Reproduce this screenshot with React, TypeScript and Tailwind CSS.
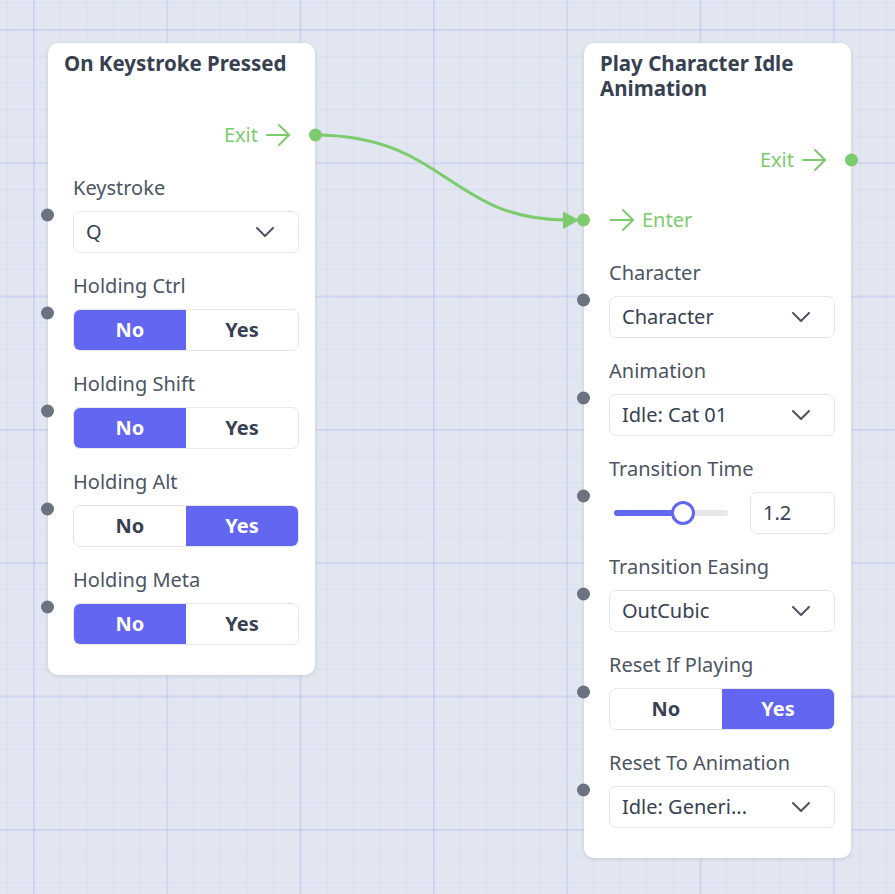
import { ReactNode } from 'react';

const GREEN = '#7ccb6d';

const Arrow = () => (
  <svg width="24" height="22" viewBox="0 0 24 22" fill="none" stroke={GREEN} strokeWidth="2" strokeLinecap="round" strokeLinejoin="round">
    <path d="M1 11H23" />
    <path d="M13 1L23 11L13 21" />
  </svg>
);

const Chevron = () => (
  <svg width="18" height="10" viewBox="0 0 18 10" fill="none" stroke="#4b5563" strokeWidth="2" strokeLinecap="round" strokeLinejoin="round">
    <path d="M1 1L9 9L17 1" />
  </svg>
);

const InDot = () => (
  <span className="absolute left-[-32.5px] top-1/2 -translate-y-1/2 w-[13px] h-[13px] rounded-full bg-[#6b7280]" />
);

const Field = ({ label, children }: { label: string; children: ReactNode }) => (
  <div className="relative">
    <InDot />
    <div className="h-[24px] leading-[24px] text-[20px] text-[#4b5563]">{label}</div>
    <div className="mt-[11px] h-[42px]">{children}</div>
  </div>
);

const Select = ({ value }: { value: string }) => (
  <div className="h-full flex items-center justify-between pl-[12px] pr-[24px] border border-[#e5e7eb] rounded-[7px] bg-white">
    <span className="text-[20px] text-[#374151] truncate">{value}</span>
    <Chevron />
  </div>
);

const Toggle = ({ yes }: { yes: boolean }) => (
  <div className="h-full flex border border-[#e5e7eb] rounded-[7px] overflow-hidden bg-white text-[20px] font-bold">
    <div className={yes ? 'flex-1 flex items-center justify-center text-[#374151]' : 'flex-1 flex items-center justify-center bg-[#6366f1] text-white'}>No</div>
    <div className={yes ? 'flex-1 flex items-center justify-center bg-[#6366f1] text-white' : 'flex-1 flex items-center justify-center text-[#374151]'}>Yes</div>
  </div>
);

const ExitRow = () => (
  <div className="relative h-[36px] flex items-center justify-end gap-[8px] pr-[25px]">
    <span className="text-[20px]" style={{ color: GREEN }}>Exit</span>
    <Arrow />
    <span className="absolute right-[-6.5px] top-1/2 -translate-y-1/2 w-[13px] h-[13px] rounded-full bg-[#7ccb6d]" />
  </div>
);

const Card = ({ title, left, top, children }: { title: ReactNode; left: number; top: number; children: ReactNode }) => (
  <div
    className="absolute w-[267px] bg-white rounded-[10px] shadow-[0_1px_4px_rgba(15,23,42,0.12)] pt-[8px] pb-[30px]"
    style={{ left, top }}
  >
    <div className="px-[16px] text-[20.5px] leading-[25px] font-bold text-[#374151]">{title}</div>
    {children}
  </div>
);

export default function App() {
  return (
    <div className="relative w-[895px] h-[894px] overflow-hidden font-['Noto_Sans',sans-serif] bg-[#e1e6f0] bg-[image:linear-gradient(to_right,rgba(99,102,241,0.11)_2px,transparent_2px),linear-gradient(to_bottom,rgba(99,102,241,0.11)_2px,transparent_2px),linear-gradient(to_right,rgba(99,102,241,0.06)_1px,transparent_1px),linear-gradient(to_bottom,rgba(99,102,241,0.06)_1px,transparent_1px)] bg-[size:133.333px_133.333px,133.333px_133.333px,26.667px_26.667px,26.667px_26.667px] bg-[position:33px_29px,33px_29px,6.5px_2.5px,6.5px_2.5px]">
      <svg className="absolute inset-0" width="895" height="894">
        <path d="M315 135 C 445 135, 450 220, 566 220" fill="none" stroke={GREEN} strokeWidth="3" />
        <polygon points="563,211.5 563,229 579,220.3" fill={GREEN} />
      </svg>

      <Card title="On Keystroke Pressed" left={48} top={43}>
        <div className="mt-[41px]">
          <ExitRow />
        </div>
        <div className="mt-[23px] pl-[25px] pr-[16px] flex flex-col gap-[21px]">
          <Field label="Keystroke"><Select value="Q" /></Field>
          <Field label="Holding Ctrl"><Toggle yes={false} /></Field>
          <Field label="Holding Shift"><Toggle yes={false} /></Field>
          <Field label="Holding Alt"><Toggle yes={true} /></Field>
          <Field label="Holding Meta"><Toggle yes={false} /></Field>
        </div>
      </Card>

      <Card title={<>Play Character Idle<br />Animation</>} left={584} top={43}>
        <div className="mt-[41px]">
          <ExitRow />
        </div>
        <div className="relative mt-[24px] h-[36px] flex items-center gap-[8px] pl-[26px]">
          <span className="absolute left-[-7.5px] top-1/2 -translate-y-1/2 w-[13px] h-[13px] rounded-full bg-[#7ccb6d]" />
          <Arrow />
          <span className="text-[20px]" style={{ color: GREEN }}>Enter</span>
        </div>
        <div className="mt-[23px] pl-[25px] pr-[16px] flex flex-col gap-[21px]">
          <Field label="Character"><Select value="Character" /></Field>
          <Field label="Animation"><Select value="Idle: Cat 01" /></Field>
          <Field label="Transition Time">
            <div className="h-full flex items-center gap-[17px]">
              <div className="w-[124px] px-[5px]">
                <div className="relative h-[6px] rounded-full bg-[#e5e7eb]">
                  <div className="absolute left-0 top-0 h-full w-[69px] rounded-full bg-[#6366f1]" />
                  <div className="absolute left-[57px] top-1/2 -translate-y-1/2 w-[24px] h-[24px] rounded-full bg-white border-[3px] border-[#6366f1]" />
                </div>
              </div>
              <div className="flex-1 h-full flex items-center pl-[12px] border border-[#e5e7eb] rounded-[7px] text-[20px] text-[#374151]">1.2</div>
            </div>
          </Field>
          <Field label="Transition Easing"><Select value="OutCubic" /></Field>
          <Field label="Reset If Playing"><Toggle yes={true} /></Field>
          <Field label="Reset To Animation"><Select value="Idle: Generi..." /></Field>
        </div>
      </Card>
    </div>
  );
}
